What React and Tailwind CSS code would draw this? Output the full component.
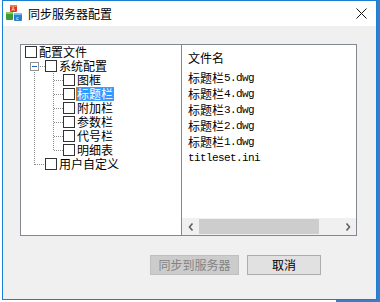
import React from 'react';

const cjk = { fontFamily: '"Noto Sans CJK SC", "Noto Sans", sans-serif' };

const tree = [
    { label: '配置文件', indent: 4 },
    { label: '系统配置', indent: 24 },
    { label: '图框', indent: 42 },
    { label: '标题栏', indent: 42, selected: true },
    { label: '附加栏', indent: 42 },
    { label: '参数栏', indent: 42 },
    { label: '代号栏', indent: 42 },
    { label: '明细表', indent: 42 },
    { label: '用户自定义', indent: 24 },
];

const files = ['标题栏5', '标题栏4', '标题栏3', '标题栏2', '标题栏1'];

function AppIcon() {
    return (
        <svg width="16" height="17" viewBox="0 0 16 17">
            {/* red cube */}
            <rect x="4" y="0" width="7" height="7" rx="1" fill="#d9382a" />
            <rect x="4" y="0" width="7" height="2" rx="1" fill="#f07a5a" />
            <text x="5.5" y="6" fontSize="5" fill="#fff" fontFamily="Liberation Sans">A</text>
            {/* green cube */}
            <rect x="0" y="7" width="7" height="8" rx="1" fill="#3f9b3a" />
            <rect x="0" y="7" width="7" height="2" rx="1" fill="#8acb5a" />
            {/* blue cube */}
            <rect x="8" y="8" width="8" height="8" rx="1" fill="#2a7fcf" />
            <rect x="8" y="8" width="8" height="2" rx="1" fill="#7cc0ef" />
            <text x="10" y="15" fontSize="5" fill="#fff" fontFamily="Liberation Sans">c</text>
        </svg>
    );
}

function TreeLines() {
    // drawn over the tree box; coordinates relative to the box's inner edge (x 21, y 45)
    const kids = [35, 49, 63, 77, 91, 105];
    return (
        <svg className="absolute left-0 top-0" width="160" height="190" shapeRendering="crispEdges">
            <g stroke="#8c8c8c" strokeDasharray="1 1" strokeWidth="1">
                <line x1="13.5" y1="27" x2="13.5" y2="120" />
                <line x1="13.5" y1="119.5" x2="24" y2="119.5" />
                <line x1="17" y1="21.5" x2="24" y2="21.5" />
                <line x1="32.5" y1="28" x2="32.5" y2="106" />
                {kids.map((y) => (
                    <line key={y} x1="32.5" y1={y + 0.5} x2="42" y2={y + 0.5} />
                ))}
            </g>
            <rect x="9.5" y="17.5" width="8" height="8" fill="#fff" stroke="#919191" />
            <line x1="11" y1="21.5" x2="16" y2="21.5" stroke="#1d5fb6" />
        </svg>
    );
}

function TreeRow({ item }) {
    return (
        <div className="h-[14px] flex items-center" style={{ paddingLeft: item.indent }}>
            <div className="w-3 h-3 border border-[#333] bg-white shrink-0" />
            <span
                className={
                    'ml-[1px] px-[1px] h-[14px] leading-[14px] text-[12px] ' +
                    (item.selected
                        ? 'bg-[#3399ff] text-white outline outline-1 outline-dotted outline-[#d08030] -outline-offset-1'
                        : 'text-black')
                }
                style={cjk}
            >
                {item.label}
            </span>
        </div>
    );
}

function Chevron({ dir }) {
    return (
        <svg width="6" height="8" viewBox="0 0 6 8">
            <path
                d={dir === 'left' ? 'M4.5 0.5 L1.5 4 L4.5 7.5' : 'M1.5 0.5 L4.5 4 L1.5 7.5'}
                fill="none"
                stroke="#606060"
                strokeWidth="1.6"
            />
        </svg>
    );
}

export default function App() {
    return (
        <div className="w-[380px] h-[302px] bg-white overflow-hidden flex flex-col">
            <div className="flex h-[300px]">
                <div className="w-[2px] bg-white" />
                {/* dialog */}
                <div className="w-[375px] h-[300px] border border-[#1a7fd4] bg-[#f0f0f0] flex flex-col">
                    <div className="h-[25px] bg-white flex items-center pl-[2px] pr-[9px]">
                        <div className="ml-[1px]"><AppIcon /></div>
                        <span className="ml-[6px] text-[12px] text-black" style={cjk}>同步服务器配置</span>
                        <div className="ml-auto">
                            <svg width="11" height="11" viewBox="0 0 11 11">
                                <path d="M0.5 0.5 L10.5 10.5 M10.5 0.5 L0.5 10.5" stroke="#111" strokeWidth="1" />
                            </svg>
                        </div>
                    </div>
                    <div className="pl-[17px] pt-[18px] flex">
                        {/* tree */}
                        <div className="w-[162px] h-[192px] border border-[#828790] bg-white relative">
                            <TreeLines />
                            <div className="relative">
                                {tree.map((item) => (
                                    <TreeRow key={item.label} item={item} />
                                ))}
                            </div>
                        </div>
                        {/* file list */}
                        <div className="w-[175px] h-[192px] border-y border-r border-[#828790] bg-white flex flex-col">
                            <div className="flex-1 pl-[6px] pt-[5px]">
                                <div className="h-4 leading-4 text-[12px] text-black" style={cjk}>文件名</div>
                                <div className="mt-[4px]">
                                    {files.map((f) => (
                                        <div key={f} className="h-4 leading-4 text-[12px] text-black flex items-center" style={cjk}>
                                            {f.slice(0, 3)}
                                            <span className="text-[11px] tracking-[-0.6px]" style={{ fontFamily: '"Liberation Mono", monospace' }}>
                                                {f.slice(3)}.dwg
                                            </span>
                                        </div>
                                    ))}
                                    <div className="h-4 leading-4 text-[11px] tracking-[-0.6px] text-black" style={{ fontFamily: '"Liberation Mono", monospace' }}>
                                        titleset.ini
                                    </div>
                                </div>
                            </div>
                            <div className="h-[17px] bg-[#f0f0f0] flex items-center">
                                <div className="w-[17px] flex justify-center"><Chevron dir="left" /></div>
                                <div className="w-[120px] h-[15px] bg-[#cdcdcd]" />
                                <div className="flex-1 flex justify-end pr-[5px]"><Chevron dir="right" /></div>
                            </div>
                        </div>
                    </div>
                    <div className="flex pl-[147px] pt-[19px] gap-[8px]">
                        <button
                            className="w-[89px] h-[20px] bg-[#cccccc] border border-[#bfbfbf] text-[12px] text-[#838383] flex items-center justify-center"
                            style={cjk}
                        >
                            同步到服务器
                        </button>
                        <button
                            className="w-[74px] h-[20px] bg-[#e1e1e1] border border-[#adadad] text-[12px] text-black flex items-center justify-center"
                            style={cjk}
                        >
                            取消
                        </button>
                    </div>
                </div>
                <div className="flex-1 bg-[#3d7cc4]" />
            </div>
            <div className="h-[2px] flex">
                <div className="w-[336px] bg-white" />
                <div className="flex-1 bg-[#3d7cc4]" />
            </div>
        </div>
    );
}
